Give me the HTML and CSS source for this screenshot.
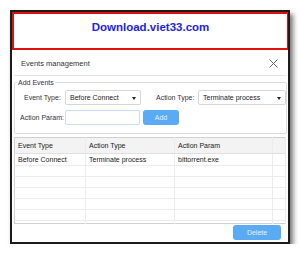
FILE: index.html
```html
<!DOCTYPE html>
<html lang="en">
<head>
    <meta charset="UTF-8">
    <title>Events management</title>
    <link rel="stylesheet" href="styles.css">
</head>
<body>
    <div class="frame">
        <div class="banner">Download.viet33.com</div>
        <div class="dialog">
            <div class="title-bar">
                <span>Events management</span>
                <svg class="close" width="9" height="9" viewBox="0 0 9 9"><path d="M0.5 0.5L8.5 8.5M8.5 0.5L0.5 8.5" stroke="#666" stroke-width="1"/></svg>
            </div>
            <fieldset class="add-events">
                <legend>Add Events</legend>
                <div class="form-row">
                    <label class="lbl lbl-event">Event Type:</label>
                    <div class="select sel-event">Before Connect<span class="caret"></span></div>
                    <label class="lbl lbl-action">Action Type:</label>
                    <div class="select sel-action">Terminate process<span class="caret"></span></div>
                </div>
                <div class="form-row">
                    <label class="lbl lbl-param">Action Param:</label>
                    <div class="input"></div>
                    <button class="btn btn-add">Add</button>
                </div>
            </fieldset>
            <table class="events-table">
                <tr>
                    <th class="c1">Event Type</th>
                    <th class="c2">Action Type</th>
                    <th class="c3">Action Param</th>
                    <th class="c4"></th>
                </tr>
                <tr class="first">
                    <td>Before Connect</td>
                    <td>Terminate process</td>
                    <td>bittorrent.exe</td>
                    <td></td>
                </tr>
                <tr><td></td><td></td><td></td><td></td></tr>
                <tr><td></td><td></td><td></td><td></td></tr>
                <tr><td></td><td></td><td></td><td></td></tr>
                <tr><td></td><td></td><td></td><td></td></tr>
                <tr><td></td><td></td><td></td><td></td></tr>
                <tr class="last"><td></td><td></td><td></td><td></td></tr>
            </table>
            <div class="footer">
                <button class="btn btn-delete">Delete</button>
            </div>
        </div>
    </div>
</body>
</html>
```

FILE: styles.css
```css
body {
    margin: 0;
    padding: 10px 0 0 10px;
    background: #fff;
    font-family: "Liberation Sans", Arial, sans-serif;
    font-size: 8px;
    color: #222;
}
.frame {
    width: 276px;
    height: 230px;
    border: 2px solid #1c1c1c;
    box-shadow: 3px 4px 5px rgba(0, 0, 0, 0.55);
    background: #fff;
}
.banner {
    height: 34px;
    border: 2px solid #e01010;
    border-width: 2px 1px 2px 2px;
    text-align: center;
    font-weight: bold;
    font-size: 11.5px;
    color: #2323e6;
    line-height: 26px;
}
.dialog {
    padding: 0 2px;
}
.title-bar {
    display: flex;
    justify-content: space-between;
    align-items: center;
    height: 26px;
    padding: 2px 8px 0 7px;
    box-sizing: border-box;
    border-bottom: 1px solid #e4e4e4;
    font-size: 7.5px;
    color: #333;
}
.add-events {
    margin: 3px 0 0;
    padding: 4px 0 8px 0;
    border: 1px solid #dcdcdc;
    border-radius: 2px;
}
.add-events legend {
    padding: 0 1px;
    margin-left: 2px;
    font-size: 7px;
    color: #333;
}
.form-row {
    display: flex;
    align-items: center;
    height: 15px;
    margin-bottom: 5px;
}
.form-row:last-child {
    margin-bottom: 0;
}
.lbl {
    font-size: 7px;
    color: #333;
    white-space: nowrap;
}
.lbl-event {
    margin-left: 9px;
    width: 41px;
}
.lbl-action {
    margin-left: 15px;
    width: 42px;
}
.lbl-param {
    margin-left: 5px;
    width: 45px;
}
.select {
    position: relative;
    height: 13px;
    line-height: 13px;
    border: 1px solid #d6d6d6;
    border-radius: 2px;
    padding-left: 4px;
    font-size: 7px;
    color: #222;
    white-space: nowrap;
}
.sel-event {
    width: 70px;
}
.sel-action {
    width: 82px;
}
.caret {
    position: absolute;
    right: 4px;
    top: 6px;
    border-left: 2.5px solid transparent;
    border-right: 2.5px solid transparent;
    border-top: 3px solid #222;
}
.input {
    width: 73px;
    height: 13px;
    border: 1px solid #c9def2;
    border-radius: 2px;
}
.btn {
    border: none;
    border-radius: 3px;
    background: #5aaaf4;
    color: #e6f2fe;
    font-family: inherit;
    font-size: 7px;
    padding: 0;
}
.btn-add {
    margin-left: 3px;
    width: 36px;
    height: 15px;
}
.events-table {
    margin-top: 3px;
    width: 100%;
    border-collapse: collapse;
    border: 1px solid #d0d0d0;
    font-size: 7px;
    color: #222;
}
.events-table th,
.events-table td {
    border-right: 1px solid #ececec;
    border-bottom: 1px solid #ececec;
    height: 10px;
    padding: 0 0 0 3px;
    text-align: left;
    font-weight: normal;
    white-space: nowrap;
}
.events-table th {
    background: #f3f3f3;
    height: 15px;
    border-bottom: 1px solid #e0e0e0;
}
.events-table .first td {
    height: 11px;
}
.events-table .last td {
    height: 2px;
    border-bottom: none;
}
.c1 { width: 67px; }
.c2 { width: 85px; }
.c3 { width: 94px; }
.footer {
    display: flex;
    justify-content: flex-end;
    padding: 1px 5px 0 0;
}
.btn-delete {
    width: 48px;
    height: 15px;
}
```
